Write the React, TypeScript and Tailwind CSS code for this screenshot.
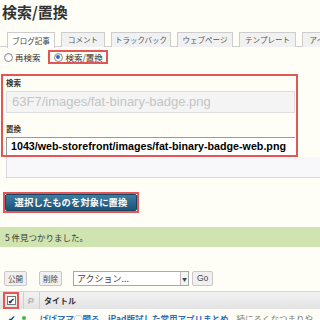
import { Flag } from "lucide-react";

const tabs = [
  { t: "ブログ記事", w: "w-[48px]" },
  { t: "コメント", w: "w-[44px]" },
  { t: "トラックバック", w: "w-[60px]" },
  { t: "ウェブページ", w: "w-[56px]" },
  { t: "テンプレート", w: "w-[57px]" },
  { t: "アイテム", w: "w-[44px]" },
];

function Radio({ on }: { on?: boolean }) {
  return (
    <span className="relative inline-flex w-[9px] h-[9px] rounded-full border border-[#8c8c8c] bg-white items-center justify-center shadow-[inset_0_1px_1px_rgba(0,0,0,0.15)]">
      {on && <span className="w-[4px] h-[4px] rounded-full bg-[#2a6fd0]" />}
    </span>
  );
}

export default function App() {
  return (
    <div
      className="w-[320px] h-[320px] overflow-hidden bg-[#fefef7] text-[#333]"
      style={{ fontFamily: '"Noto Sans CJK JP", "Liberation Sans", sans-serif' }}
    >
      <h1 className="pl-[2px] pt-[3px] text-[15px] leading-[18px] font-bold text-[#333]">検索/置換</h1>

      {/* tabs */}
      <div className="mt-[11px] flex gap-[6px] pl-[7px] border-b border-[#cfcfcf] h-[15px] whitespace-nowrap">
        {tabs.map((x, i) => (
          <div
            key={x.t}
            className={
              "shrink-0 h-[15px] flex items-center justify-center text-[7.5px] leading-none border border-[#cdcdcd] border-b-0 " +
              x.w +
              (i === 0 ? " bg-white h-[16px] text-[#444]" : " bg-[#f1f1f1] text-[#555]")
            }
          >
            {x.t}
          </div>
        ))}
      </div>

      {/* radios */}
      <div className="mt-[3px] flex items-center h-[14px] text-[8.5px] leading-none">
        <div className="flex items-center gap-[2px] pl-[4px]">
          <Radio />
          <span>再検索</span>
        </div>
        <div className="ml-[7px] w-[60px] h-[14px] border-2 border-[#e25656] flex items-center gap-[3px] pl-[4px]">
          <Radio on />
          <span>検索/置換</span>
        </div>
      </div>

      {/* search / replace fields */}
      <div className="mt-[10px] ml-[1px] w-[297px] border-2 border-[#e25656] pl-[3px] pr-[1px] pt-[2px]">
        <div className="text-[7.5px] font-bold leading-[10px]">検索</div>
        <div className="mt-[3px] h-[22px] border border-[#dedede] bg-[#f4f4f4] flex items-center pl-[5px] text-[13px] text-[#c4c4c4] whitespace-nowrap overflow-hidden"
          style={{ fontFamily: '"Liberation Sans", sans-serif' }}>
          63F7/images/fat-binary-badge.png
        </div>
        <div className="mt-[11px] text-[7.5px] font-bold leading-[10px]">置換</div>
        <div className="mt-[3px] h-[18px] border-t border-l border-[#9a9a9a] bg-white flex items-center pl-[4px] text-[10.7px] font-bold text-black whitespace-nowrap overflow-hidden"
          style={{ fontFamily: '"Liberation Sans", sans-serif' }}>
          1043/web-storefront/images/fat-binary-badge-web.png
        </div>
      </div>
      <div className="ml-[6px] h-[21px] bg-[#f8f8fa] border-l border-b border-[#d9d9dc]" />

      {/* submit */}
      <div className="mt-[14px] ml-[3px] w-[136px] border-2 border-[#e25656]">
        <div className="h-[17px] bg-gradient-to-b from-[#3d7da3] to-[#1c5376] border border-[#174563] rounded-[2px] flex items-center justify-center text-white text-[9.3px] font-bold leading-none tracking-[0.1px]">
          選択したものを対象に置換
        </div>
      </div>

      {/* message */}
      <div className="mt-[14px] h-[20px] bg-[#cfe4b0] flex items-center pl-[5px] text-[8.5px] text-[#3a3a3a]">
        5 件見つかりました。
      </div>

      {/* actions */}
      <div className="mt-[24px] flex items-center h-[15px] text-[7.5px] text-[#444]">
        <div className="ml-[4px] h-[15px] px-[3px] border border-[#c8c8c8] bg-[#f0f0f0] rounded-[2px] flex items-center">公開</div>
        <div className="ml-[12px] h-[15px] px-[3px] border border-[#c8c8c8] bg-[#f0f0f0] rounded-[2px] flex items-center">削除</div>
        <div className="ml-[11px] w-[116px] h-[15px] border border-[#a8a8a8] bg-white flex items-center justify-between pl-[3px] text-[9px]">
          <span>アクション...</span>
          <span className="w-[8px] h-[13px] border-l border-[#bbb] bg-[#f4f4f4] flex items-center justify-center text-[5px]">▼</span>
        </div>
        <div className="ml-[3px] h-[15px] px-[4px] border border-[#c8c8c8] bg-[#f0f0f0] rounded-[2px] flex items-center text-[8.5px]"
          style={{ fontFamily: '"Liberation Sans", sans-serif' }}>Go</div>
      </div>

      {/* table header */}
      <div className="mt-[5px] h-[18px] bg-gradient-to-b from-[#f2f2f2] to-[#e3e3e3] border-t border-[#d6d6d6] flex items-center text-[8px] font-bold text-[#333]">
        <div className="ml-[3px] w-[16px] h-[17px] border-2 border-[#e25656] flex items-center justify-center">
          <span className="w-[9px] h-[9px] border border-[#777] bg-white flex items-center justify-center text-[8px] leading-none text-[#1a2a6a]">✔</span>
        </div>
        <div className="ml-[4px] h-full border-l border-[#d0d0d0]" />
        <Flag className="ml-[4px] w-[6px] h-[6px] text-[#888]" strokeWidth={3} />
        <div className="ml-[5px] h-full border-l border-[#d0d0d0]" />
        <span className="ml-[4px]">タイトル</span>
      </div>

      {/* first row (cut off) */}
      <div className="mt-[3px] flex items-center text-[8.5px] whitespace-nowrap">
        <span className="ml-[8px] text-[#1a3a7a]">✔</span>
        <span className="ml-[6px] w-[4px] h-[4px] rounded-full bg-[#4caf50]" />
        <span className="ml-[14px] text-[#2a6fb5] font-bold">ぱぱママ◯聞る　iPad版試した常用アプリまとめ</span>
        <span className="ml-[8px] text-[#777]">続にるくなつまりや</span>
      </div>
    </div>
  );
}
